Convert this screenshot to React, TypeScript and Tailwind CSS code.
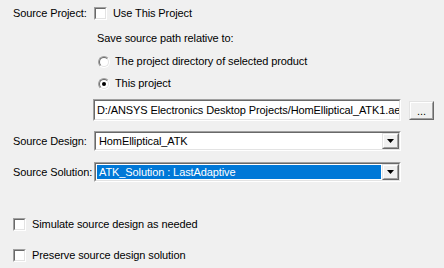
import React from "react";

function CheckBox() {
  return (
    <div className="w-[13px] h-[13px] shrink-0 border border-t-[#a0a0a0] border-l-[#a0a0a0] border-b-[#ffffff] border-r-[#ffffff]">
      <div className="w-full h-full bg-white border border-t-[#696969] border-l-[#696969] border-b-[#e3e3e3] border-r-[#e3e3e3]" />
    </div>
  );
}

function Radio({ checked }: { checked?: boolean }) {
  return (
    <div className="w-[12px] h-[12px] shrink-0 rounded-full border border-t-[#a0a0a0] border-l-[#a0a0a0] border-b-[#ffffff] border-r-[#ffffff]">
      <div className="w-full h-full rounded-full bg-white border border-t-[#696969] border-l-[#696969] border-b-[#e3e3e3] border-r-[#e3e3e3] flex items-center justify-center">
        {checked && <div className="w-[4px] h-[4px] rounded-full bg-black" />}
      </div>
    </div>
  );
}

function Sunken({ className, children }: { className?: string; children?: React.ReactNode }) {
  return (
    <div className={`border border-t-[#a0a0a0] border-l-[#a0a0a0] border-b-[#ffffff] border-r-[#ffffff] ${className ?? ""}`}>
      <div className="w-full h-full bg-white border border-t-[#696969] border-l-[#696969] border-b-[#e3e3e3] border-r-[#e3e3e3] flex overflow-hidden">
        {children}
      </div>
    </div>
  );
}

function Raised({ className, children }: { className?: string; children?: React.ReactNode }) {
  return (
    <div className={`bg-[#f0f0f0] border border-t-[#e3e3e3] border-l-[#e3e3e3] border-b-[#696969] border-r-[#696969] ${className ?? ""}`}>
      <div className="w-full h-full border border-t-white border-l-white border-b-[#a0a0a0] border-r-[#a0a0a0] flex items-center justify-center">
        {children}
      </div>
    </div>
  );
}

function Combo({ value, selected }: { value: string; selected?: boolean }) {
  return (
    <Sunken className="w-[307px] h-[20px]">
      <div className="flex-1 flex items-center p-px min-w-0">
        <div
          className={`h-full w-full flex items-center pl-[2px] whitespace-nowrap ${
            selected ? "bg-[#0078d7] text-white" : ""
          }`}
        >
          {value}
        </div>
      </div>
      <Raised className="w-[17px] h-full shrink-0">
        <svg width="7" height="4" viewBox="0 0 7 4">
          <polygon points="0,0 7,0 3.5,4" fill="#000" />
        </svg>
      </Raised>
    </Sunken>
  );
}

export default function App() {
  return (
    <div className="w-[444px] h-[268px] bg-[#f0f0f0] text-black text-[11px] leading-[13px] tracking-[-0.1px] font-['Liberation_Sans',Arial,sans-serif] pl-[13px] pt-[7px] flex flex-col overflow-hidden">
      {/* Source project */}
      <div className="flex items-center h-[13px]">
        <div className="w-[81px]">Source Project:</div>
        <CheckBox />
        <span className="ml-[6px]">Use This Project</span>
      </div>

      <div className="mt-[12px] h-[13px] ml-[84px]">Save source path relative to:</div>

      <div className="mt-[10px] h-[13px] ml-[85px] flex items-center">
        <Radio />
        <span className="ml-[5px]">The project directory of selected product</span>
      </div>

      <div className="mt-[9px] h-[13px] ml-[85px] flex items-center">
        <Radio checked />
        <span className="ml-[5px]">This project</span>
      </div>

      {/* Path */}
      <div className="mt-[9px] ml-[80px] flex items-start">
        <Sunken className="w-[308px] h-[22px]">
          <div className="flex items-center pl-[2px] whitespace-nowrap">
            D:/ANSYS Electronics Desktop Projects/HomElliptical_ATK1.aedt
          </div>
        </Sunken>
        <Raised className="ml-[8px] mt-[2px] w-[25px] h-[19px]">
          <span className="leading-none mt-[2px]">...</span>
        </Raised>
      </div>

      {/* Design */}
      <div className="mt-[10px] flex items-center h-[20px]">
        <div className="w-[81px]">Source Design:</div>
        <Combo value="HomElliptical_ATK" />
      </div>

      <div className="mt-[11px] flex items-center h-[20px]">
        <div className="w-[81px]">Source Solution:</div>
        <Combo value="ATK_Solution : LastAdaptive" selected />
      </div>

      <div className="mt-[36px] flex items-center h-[13px]">
        <CheckBox />
        <span className="ml-[6px]">Simulate source design as needed</span>
      </div>

      <div className="mt-[18px] flex items-center h-[13px]">
        <CheckBox />
        <span className="ml-[6px]">Preserve source design solution</span>
      </div>
    </div>
  );
}
